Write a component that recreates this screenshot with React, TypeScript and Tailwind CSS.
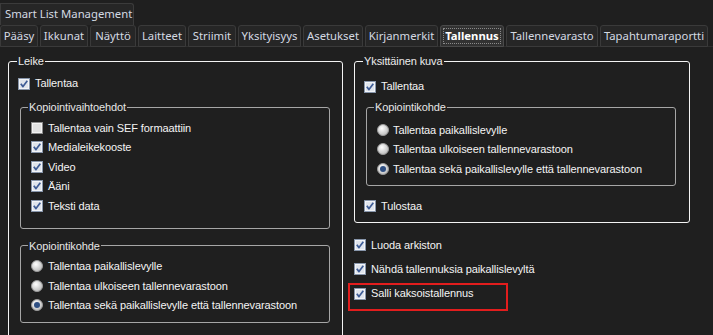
import React from "react";

function CheckBox({ checked = true }: { checked?: boolean }) {
  return (
    <svg width="12" height="12" viewBox="0 0 12 12" className="shrink-0 block">
      <rect x="0.5" y="0.5" width="11" height="11" fill={checked ? "#dfe4ec" : "#e2e2e2"} stroke={checked ? "#8896ab" : "#8c8c8c"} />
      <rect x="1.5" y="1.5" width="9" height="9" fill="none" stroke={checked ? "#f2f4f8" : "#f4f4f4"} strokeWidth="1" />
      {checked && <path d="M2.8 5.8 L5 8.6 L9.3 2.8" stroke="#3e5c96" strokeWidth="1.7" fill="none" strokeLinejoin="round" />}
    </svg>
  );
}

function Radio({ checked = false }: { checked?: boolean }) {
  return (
    <svg width="12" height="12" viewBox="0 0 12 12" className="shrink-0 block">
      <defs>
        <radialGradient id="rg" cx="0.4" cy="0.35" r="0.7">
          <stop offset="0" stopColor="#ffffff" />
          <stop offset="1" stopColor="#b8b8b8" />
        </radialGradient>
      </defs>
      <circle cx="6" cy="6" r="5.5" fill="url(#rg)" stroke="#9a9a9a" strokeWidth="1" />
      {checked && <circle cx="6" cy="6" r="3" fill="#2f4f82" />}
    </svg>
  );
}

function CRow({ label, checked = true, h = "h-[19.5px]" }: { label: string; checked?: boolean; h?: string }) {
  return (
    <div className={`flex items-center gap-[5px] ${h}`}>
      <CheckBox checked={checked} />
      <span className="whitespace-nowrap">{label}</span>
    </div>
  );
}

function RRow({ label, checked = false, gap = "gap-[5px]" }: { label: string; checked?: boolean; gap?: string }) {
  return (
    <div className={`flex items-center h-[19.5px] ${gap}`}>
      <Radio checked={checked} />
      <span className="whitespace-nowrap">{label}</span>
    </div>
  );
}

const tabs: { label: string; w: string; sel?: boolean }[] = [
  { label: "Pääsy", w: "w-[38px]" },
  { label: "Ikkunat", w: "w-[48px]" },
  { label: "Näyttö", w: "w-[46px]" },
  { label: "Laitteet", w: "w-[48px]" },
  { label: "Striimit", w: "w-[48px]" },
  { label: "Yksityisyys", w: "w-[63px]" },
  { label: "Asetukset", w: "w-[60px]" },
  { label: "Kirjanmerkit", w: "w-[73px]" },
  { label: "Tallennus", w: "w-[64px]", sel: true },
  { label: "Tallennevarasto", w: "w-[92px]" },
  { label: "Tapahtumaraportti", w: "w-[108px]" },
];

export default function App() {
  return (
    <div className="w-[713px] h-[335px] bg-[#1f1f1f] overflow-hidden font-['Noto_Sans',sans-serif]">
      <div className="flex h-[25px] items-end">
        <div className="h-[22px] w-[134px] border border-b-0 border-[#3b3b3b] rounded-tr-[3px] bg-[#262626] text-[11.3px] text-[#d4d9e2] pl-[4px] leading-[20px] whitespace-nowrap">
          Smart List Management
        </div>
      </div>
      <div className="flex h-[22px] gap-[2px] border-b border-[#2e2e2e]">
        {tabs.map((t) =>
          t.sel ? (
            <div key={t.label} className={`${t.w} h-[22px] border border-[#4a4a4a] rounded-t-[3px] bg-[#323232] p-[2px] shrink-0`}>
              <div className="h-full border border-dotted border-[#8a8a8a] flex items-center justify-center text-[11.3px] font-bold text-white whitespace-nowrap">
                {t.label}
              </div>
            </div>
          ) : (
            <div key={t.label} className={`${t.w} h-[22px] border border-[#3a3a3a] rounded-t-[3px] bg-[#262626] flex items-center justify-center text-[11.3px] text-[#d4d9e2] whitespace-nowrap shrink-0`}>
              {t.label}
            </div>
          )
        )}
      </div>

      <div className="flex pl-[8px] pt-[7px] font-['Liberation_Sans',Arial,sans-serif] text-[11px] text-[#f4f4f4] tracking-[-0.1px]">
        {/* Left: Leike */}
        <fieldset className="w-[335px] h-[320px] border border-[#f4f4f4] rounded-[3px] shrink-0">
          <legend className="ml-[8px] px-[1px] leading-[14px] text-[#ececec]">Leike</legend>
          <div className="pt-[6px] pl-[9px]">
            <CRow label="Tallentaa" h="h-[19px]" />
            <fieldset className="ml-[2px] mt-[7px] w-[310px] border border-[#a6a6a6] rounded-[3px]">
              <legend className="ml-[7px] px-[1px] leading-[14px] text-[#e6e6e6]">Kopiointivaihtoehdot</legend>
              <div className="pt-[4px] pb-[12px] pl-[10px]">
                <CRow label="Tallentaa vain SEF formaattiin" checked={false} />
                <CRow label="Medialeikekooste" />
                <CRow label="Video" />
                <CRow label="Ääni" />
                <CRow label="Teksti data" />
              </div>
            </fieldset>
            <fieldset className="ml-[2px] mt-[10px] w-[310px] border border-[#a6a6a6] rounded-[3px]">
              <legend className="ml-[7px] px-[1px] leading-[14px] text-[#e6e6e6]">Kopiointikohde</legend>
              <div className="pt-[4px] pb-[7px] pl-[10px]">
                <RRow label="Tallentaa paikallislevylle" />
                <RRow label="Tallentaa ulkoiseen tallennevarastoon" />
                <RRow label="Tallentaa sekä paikallislevylle että tallennevarastoon" checked />
              </div>
            </fieldset>
          </div>
        </fieldset>

        {/* Right column */}
        <div className="ml-[11px] w-[336px] shrink-0">
          <fieldset className="w-[336px] border border-[#f4f4f4] rounded-[3px]">
            <legend className="ml-[8px] px-[1px] leading-[14px] text-[#ececec]">Yksittäinen kuva</legend>
            <div className="pt-[9px] pb-[6px] pl-[9px]">
              <CRow label="Tallentaa" h="h-[19px]" />
              <fieldset className="ml-[2px] mt-[4px] w-[310px] border border-[#a6a6a6] rounded-[3px]">
                <legend className="ml-[7px] px-[1px] leading-[14px] text-[#e6e6e6]">Kopiointikohde</legend>
                <div className="pt-[6px] pb-[6px] pl-[10px]">
                  <RRow label="Tallentaa paikallislevylle" gap="gap-[4px]" />
                  <RRow label="Tallentaa ulkoiseen tallennevarastoon" gap="gap-[4px]" />
                  <RRow label="Tallentaa sekä paikallislevylle että tallennevarastoon" checked gap="gap-[4px]" />
                </div>
              </fieldset>
              <div className="mt-[11px]">
                <CRow label="Tulostaa" h="h-[19px]" />
              </div>
            </div>
          </fieldset>
          <div className="mt-[11px]">
            <CRow label="Luoda arkiston" h="h-[23.5px]" />
            <CRow label="Nähdä tallennuksia paikallislevyltä" h="h-[23.5px]" />
          </div>
          <div className="mt-[2px] ml-[-6px] w-[160px] h-[28px] border-2 border-[#e21d1d] pl-[4px] pt-[3px]">
            <CRow label="Salli kaksoistallennus" h="h-[12px]" />
          </div>
        </div>
      </div>
    </div>
  );
}
